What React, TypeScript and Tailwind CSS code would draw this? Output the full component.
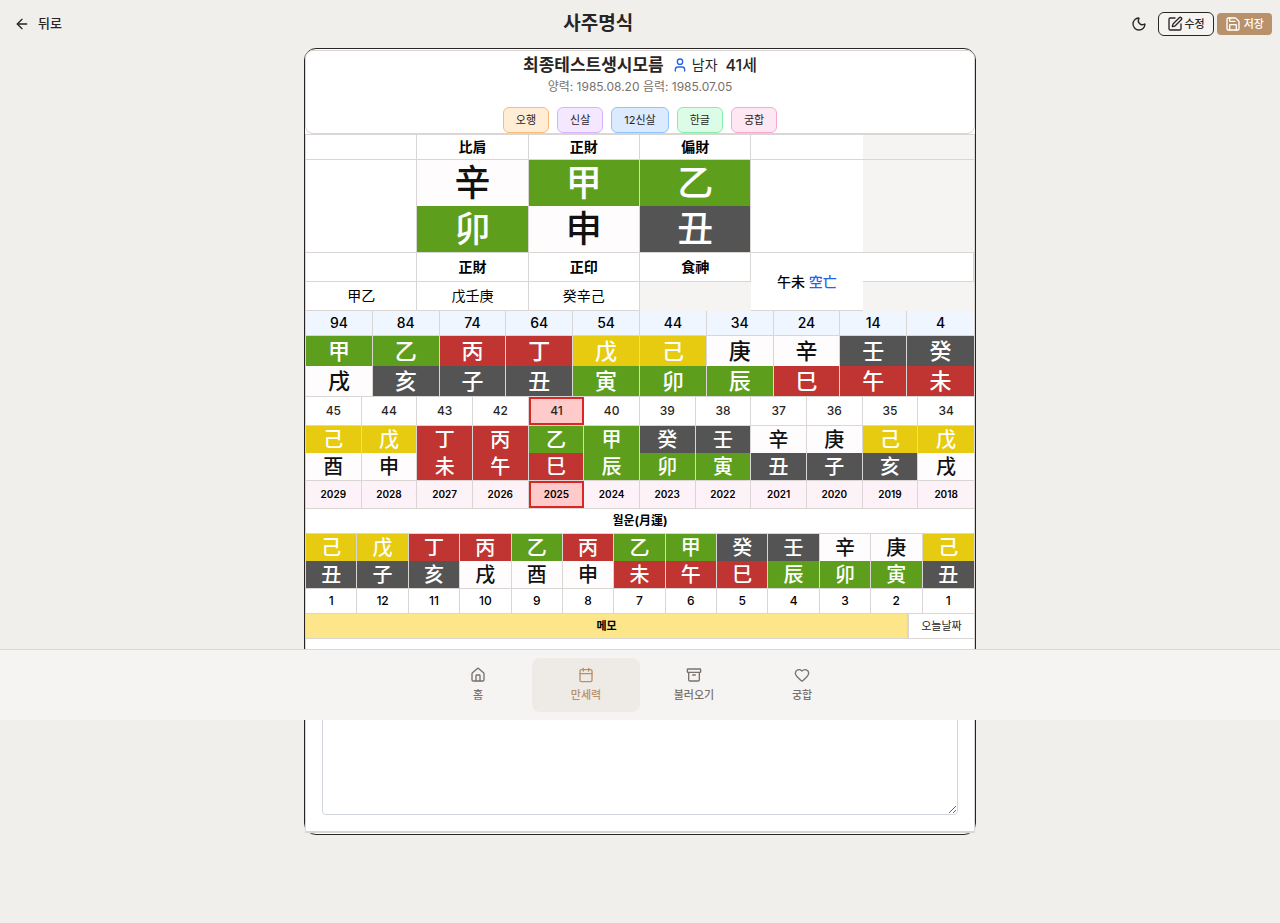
import { Archive, ArrowLeft, Calendar, Heart, House, Moon, Save, SquarePen, User } from "lucide-react";
import type { LucideIcon } from "lucide-react";

const WOOD = "bg-[#5d9f1c] text-white";
const FIRE = "bg-[#c03432] text-white";
const EARTH = "bg-[#e6cb10] text-white";
const METAL = "bg-[#fffcfd] text-[#111111]";
const WATER = "bg-[#545454] text-white";

const elementOf: Record<string, string> = {
  甲: WOOD, 乙: WOOD, 寅: WOOD, 卯: WOOD, 辰: WOOD,
  丙: FIRE, 丁: FIRE, 巳: FIRE, 午: FIRE, 未: FIRE,
  戊: EARTH, 己: EARTH,
  庚: METAL, 辛: METAL, 申: METAL, 酉: METAL, 戌: METAL,
  壬: WATER, 癸: WATER, 亥: WATER, 子: WATER, 丑: WATER,
};

const HANJA = "font-['Inter','Noto_Sans_CJK_TC','Noto_Sans_CJK_KR',sans-serif] font-medium leading-none";
const LINE = "border-[#d9d6d3]";
const TABLE = "w-full table-fixed border-separate border-spacing-0 text-center";

const tags = [
  { label: "오행", tone: "border-[#fdba74] bg-[#ffedd5]" },
  { label: "신살", tone: "border-[#d8b4fe] bg-[#f3e8ff]" },
  { label: "12신살", tone: "border-[#93c5fd] bg-[#dbeafe]" },
  { label: "한글", tone: "border-[#86efac] bg-[#dcfce7]" },
  { label: "궁합", tone: "border-[#f9a8d4] bg-[#fce7f3]" },
];

const decades = { ages: ["94", "84", "74", "64", "54", "44", "34", "24", "14", "4"], stems: "甲乙丙丁戊己庚辛壬癸", branches: "戌亥子丑寅卯辰巳午未" };
const years = {
  ages: ["45", "44", "43", "42", "41", "40", "39", "38", "37", "36", "35", "34"],
  stems: "己戊丁丙乙甲癸壬辛庚己戊",
  branches: "酉申未午巳辰卯寅丑子亥戌",
  labels: ["2029", "2028", "2027", "2026", "2025", "2024", "2023", "2022", "2021", "2020", "2019", "2018"],
};
const months = { stems: "己戊丁丙乙丙乙甲癸壬辛庚己", branches: "丑子亥戌酉申未午巳辰卯寅丑", labels: ["1", "12", "11", "10", "9", "8", "7", "6", "5", "4", "3", "2", "1"] };
const CURRENT = 4;

function GlyphRow({ glyphs, size, last }: { glyphs: string; size: string; last?: boolean }) {
  return (
    <tr>
      {[...glyphs].map((g, i) => (
        <td key={i} className={`${size} ${HANJA} ${elementOf[g]} ${LINE} border-r p-0 last:border-r-0 ${last ? "border-b" : ""}`}>
          {g}
        </td>
      ))}
    </tr>
  );
}

function LabelRow({ labels, tone, current }: { labels: string[]; tone: string; current?: number }) {
  return (
    <tr>
      {labels.map((label, i) => (
        <th key={i} className={`${tone} ${LINE} relative border-r border-b p-0 last:border-r-0`}>
          {i === current ? (
            <span className="absolute inset-y-0 left-0 -right-px flex items-center justify-center border-2 border-[#dc2626] bg-[#fecaca]">
              {label}
            </span>
          ) : (
            label
          )}
        </th>
      ))}
    </tr>
  );
}

function PillarTable() {
  const head = `${LINE} h-[25px] border-b bg-white p-0 font-bold`;
  const god = `${LINE} h-[29px] border-r border-b bg-white p-0 font-bold`;
  const hidden = `${LINE} h-[29px] border-r border-b bg-white p-0`;
  return (
    <table className={`${TABLE} text-sm text-black`}>
      <tbody>
        <tr>
          <th className={`${head} border-r`} />
          {["比肩", "正財", "偏財"].map((t) => (
            <th key={t} className={`${head} border-r`}>{t}</th>
          ))}
          <td className={head} />
          <td className={`${LINE} border-b`} />
        </tr>
        <tr>
          <td rowSpan={2} className={`${LINE} border-r border-b bg-white`} />
          {["辛", "甲", "乙"].map((g) => (
            <td key={g} className={`${HANJA} ${elementOf[g]} ${LINE} h-[46px] border-r p-0 text-[36px]`}>{g}</td>
          ))}
          <td rowSpan={2} className={`${LINE} border-b bg-white`} />
          <td rowSpan={2} className={`${LINE} border-b`} />
        </tr>
        <tr>
          {["卯", "申", "丑"].map((g) => (
            <td key={g} className={`${HANJA} ${elementOf[g]} ${LINE} h-[47px] border-r border-b p-0 text-[36px]`}>{g}</td>
          ))}
        </tr>
        <tr>
          <td className={god} />
          {["正財", "正印", "食神"].map((t) => (
            <th key={t} className={god}>{t}</th>
          ))}
          <td rowSpan={2} className={`${LINE} border-b bg-white p-0 font-medium`}>
            午未 <span className="text-[#2563eb]">空亡</span>
          </td>
          <td className={god} />
        </tr>
        <tr>
          {["甲乙", "戊壬庚", "癸辛己"].map((t) => (
            <td key={t} className={hidden}>{t}</td>
          ))}
          <td />
          <td />
        </tr>
      </tbody>
    </table>
  );
}

function NavItem({ icon: Icon, label, active }: { icon: LucideIcon; label: string; active?: boolean }) {
  return (
    <a
      href="#"
      aria-current={active ? "page" : undefined}
      className={`flex h-[54px] flex-1 flex-col items-center gap-1 rounded-lg pt-[9px] text-[11px] leading-4 font-medium ${
        active ? "bg-[#eeebe6] text-[#b8906a]" : "text-[#78716c]"
      }`}
    >
      <Icon size={16} />
      {label}
    </a>
  );
}

export default function App() {
  return (
    <div className="relative min-h-screen bg-[#f0efeb] font-['Inter','Noto_Sans_CJK_KR',sans-serif] text-[#292524]">
      <header className="flex h-12 items-center justify-between pr-2 pl-1.5">
        <button className="flex h-8 items-center gap-2 pr-3 pl-2 text-[13px] font-medium">
          <ArrowLeft size={16} />
          뒤로
        </button>
        <h1 className="text-[19px] leading-7 font-bold">사주명식</h1>
        <div className="flex items-center gap-[3px]">
          <button aria-label="다크 모드" className="flex size-8 items-center justify-center">
            <Moon size={16} />
          </button>
          <button className="flex h-6 items-center gap-0.5 rounded-md border border-[#292524] bg-[#f5f4f2] px-2 text-[11px] font-medium">
            <SquarePen size={16} />
            수정
          </button>
          <button className="flex h-[22px] items-center gap-[3px] rounded bg-[#b8906a] px-2 text-[11px] font-medium text-white">
            <Save size={16} />
            저장
          </button>
        </div>
      </header>

      <main className="mx-auto max-w-2xl rounded-xl border border-[#292524] bg-white py-px">
        <section className={`${LINE} flex flex-col items-center rounded-lg border bg-white`}>
          <div className="flex h-7 items-center gap-2">
            <h2 className="text-[17px] leading-7 font-bold">최종테스트생시모름</h2>
            <span className="flex items-center gap-1 text-sm">
              <User size={16} className="text-[#2563eb]" />
              남자
            </span>
            <span className="text-base font-medium">41세</span>
          </div>
          <p className="text-xs leading-4 text-[#78716c]">양력: 1985.08.20 음력: 1985.07.05</p>
          <div className="mt-3 flex gap-2">
            {tags.map((t) => (
              <button key={t.label} className={`rounded-md border px-3 py-1 text-[11px] leading-4 ${t.tone}`}>
                {t.label}
              </button>
            ))}
          </div>
        </section>

        <section className={`${LINE} border bg-[#f5f4f2]`}>
          <PillarTable />

          <table className={`${TABLE} text-black`}>
            <tbody>
              <LabelRow labels={decades.ages} tone="h-[25px] bg-[#eff6ff] text-sm font-medium" />
              <GlyphRow glyphs={decades.stems} size="h-[30px] text-[22px]" />
              <GlyphRow glyphs={decades.branches} size="h-[31px] text-[22px]" last />
            </tbody>
          </table>

          <table className={TABLE}>
            <tbody>
              <LabelRow labels={years.ages} tone="h-[29px] bg-white text-xs font-medium" current={CURRENT} />
              <GlyphRow glyphs={years.stems} size="h-[27px] text-[20px]" />
              <GlyphRow glyphs={years.branches} size="h-[28px] text-[20px]" last />
              <LabelRow labels={years.labels} tone="h-[28px] bg-[#fdf2f8] text-[10px] font-semibold text-black" current={CURRENT} />
            </tbody>
          </table>

          <table className={`${TABLE} text-black`}>
            <caption className={`${LINE} h-[25px] border-b bg-white text-xs leading-6 font-bold`}>월운(月運)</caption>
            <tbody>
              <GlyphRow glyphs={months.stems} size="h-[27px] text-[20px]" />
              <GlyphRow glyphs={months.branches} size="h-[28px] text-[20px]" last />
              <LabelRow labels={months.labels} tone="h-[25px] bg-white text-xs font-medium" />
            </tbody>
          </table>

          <div className={`${LINE} flex h-[25px] border-b bg-white text-[11px]`}>
            <label htmlFor="memo" className={`${LINE} flex flex-1 items-center justify-center border-r bg-[#fde68a] font-bold text-black`}>
              메모
            </label>
            <button className={`${LINE} w-[66px] border-l`}>오늘날짜</button>
          </div>
          <div className={`${LINE} border-b bg-white p-4`}>
            <textarea id="memo" className="block h-40 w-full resize-y rounded border border-gray-300 bg-white p-2 text-sm" />
          </div>
        </section>
      </main>

      <nav className="absolute inset-x-0 top-[649px] border-t border-[#d9d9d9] bg-[#f5f4f2] py-2">
        <div className="mx-auto flex max-w-md px-2">
          <NavItem icon={House} label="홈" />
          <NavItem icon={Calendar} label="만세력" active />
          <NavItem icon={Archive} label="불러오기" />
          <NavItem icon={Heart} label="궁합" />
        </div>
      </nav>
    </div>
  );
}
